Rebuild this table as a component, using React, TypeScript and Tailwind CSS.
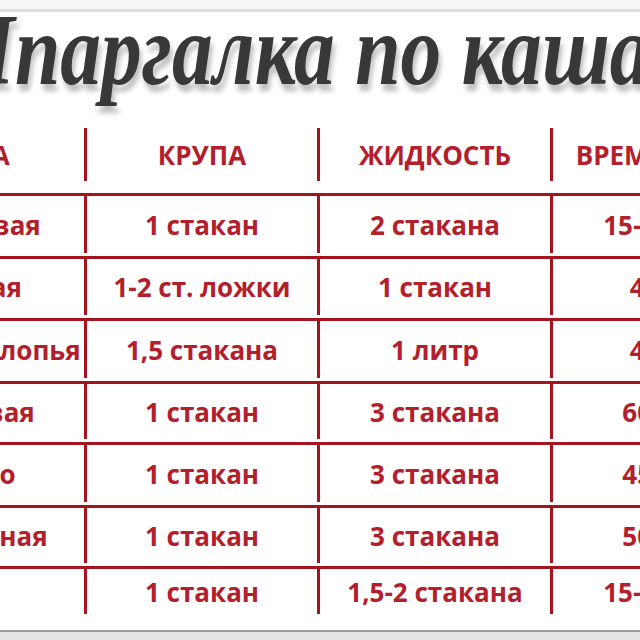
// Шпаргалка по кашам — таблица пропорций крупы и жидкости

const LINE = 'border-[#a3141f]';

type Row = {
    name: string;
    grain: string;
    liquid: string;
    time: string;
    height: string;
};

const ROWS: Row[] = [
    { name: 'Гречневая', grain: '1 стакан', liquid: '2 стакана', time: '15-20 мин', height: 'h-[63px]' },
    { name: 'Манная', grain: '1-2 ст. ложки', liquid: '1 стакан', time: '4 мин', height: 'h-[62px]' },
    { name: 'Овсяные хлопья', grain: '1,5 стакана', liquid: '1 литр', time: '4 мин', height: 'h-[63px]' },
    { name: 'Перловая', grain: '1 стакан', liquid: '3 стакана', time: '60 мин', height: 'h-[61px]' },
    { name: 'Пшено', grain: '1 стакан', liquid: '3 стакана', time: '45 мин', height: 'h-[63px]' },
    { name: 'Кукурузная', grain: '1 стакан', liquid: '3 стакана', time: '50 мин', height: 'h-[61px]' },
    { name: 'Рис', grain: '1 стакан', liquid: '1,5-2 стакана', time: '15-20 мин', height: 'h-[48px]' },
];

function Cell({ children, last }: { children: React.ReactNode; last?: boolean }) {
    return (
        <div
            className={`flex w-[233px] shrink-0 items-center justify-center whitespace-nowrap ${
                last ? '' : `border-r-[3px] ${LINE}`
            }`}
        >
            {children}
        </div>
    );
}

export default function App() {
    return (
        <div className="flex h-[640px] w-[640px] flex-col overflow-hidden bg-white">
            {/* верхняя серая полоса */}
            <div className="h-[9px] shrink-0 bg-[#f8f8f8]" />
            <div className="h-[3px] shrink-0 bg-[#dedede]" />

            {/* заголовок */}
            <div className="h-[116px] shrink-0">
                <div
                    className="-mt-[13px] -ml-[77px] origin-left scale-x-80 text-[102px] leading-none font-bold whitespace-nowrap text-[#383838] italic [text-shadow:3px_7px_6px_rgba(0,0,0,0.25)]"
                    style={{ fontFamily: '"Liberation Serif", serif' }}
                >
                    Шпаргалка по кашам
                </div>
            </div>

            {/* таблица */}
            <div
                className="-ml-[146px] flex w-[932px] shrink-0 flex-col text-[26px] leading-none font-bold text-[#b3202c]"
                style={{ fontFamily: '"Open Sans", "Noto Sans", sans-serif' }}
            >
                <div className={`flex h-[68px] border-b-[3px] pb-3 ${LINE}`}>
                    <Cell>КАША</Cell>
                    <Cell>КРУПА</Cell>
                    <Cell>ЖИДКОСТЬ</Cell>
                    <Cell last>ВРЕМЯ ВАРКИ</Cell>
                </div>
                {ROWS.map((row, i) => (
                    <div
                        key={row.name}
                        className={`flex ${row.height} pb-[3px] ${i < ROWS.length - 1 ? `border-b-[3px] ${LINE}` : ''}`}
                    >
                        <Cell>{row.name}</Cell>
                        <Cell>{row.grain}</Cell>
                        <Cell>{row.liquid}</Cell>
                        <Cell last>{row.time}</Cell>
                    </div>
                ))}
            </div>

            {/* нижняя рамка */}
            <div className="h-[13px] shrink-0" />
            <div className="h-[2px] shrink-0 bg-[#9a9a9a]" />
            <div className="flex-1 bg-[#e4e4e4]" />
        </div>
    );
}
